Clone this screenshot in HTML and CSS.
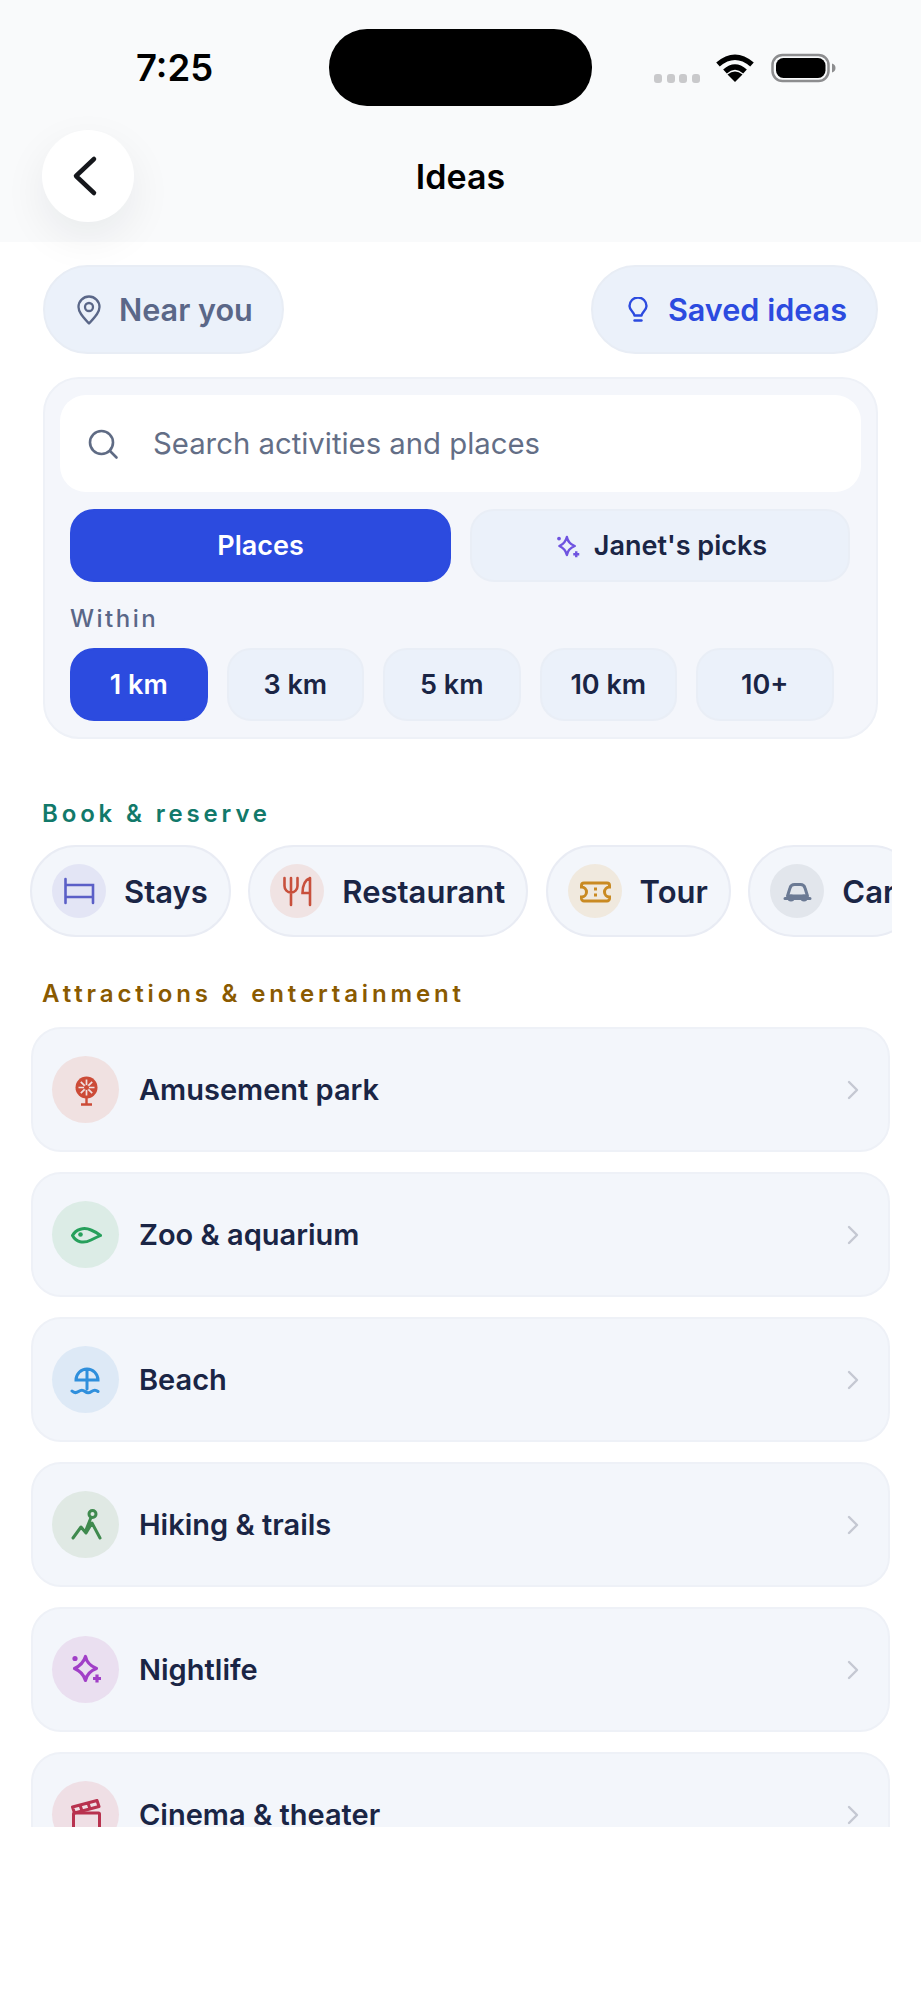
FILE: index.html
```html
<!DOCTYPE html>
<html lang="en">
<head>
    <meta charset="UTF-8">
    <meta name="viewport" content="width=device-width, initial-scale=1.0">
    <title>Ideas</title>
    <link rel="stylesheet" href="styles.css">
</head>
<body>

    <!-- Status bar and title -->
    <header class="top">
        <div class="status">
            <span class="time">7:25</span>
            <div class="island"></div>
            <div class="signal"><i></i><i></i><i></i><i></i></div>
            <svg class="wifi" width="40" height="29" viewBox="0 0 40 29">
                <path d="M3 11.5Q20 -3 37 11.5M10 18.5Q20 9.5 30 18.5" fill="none" stroke="#000" stroke-width="5.5"/>
                <path d="M20 29L12.5 21.5Q20 15.5 27.5 21.5Z"/>
            </svg>
            <svg class="battery" width="65" height="30" viewBox="0 0 65 30">
                <rect x="1.5" y="2" width="56" height="26" rx="10" fill="none" stroke="#8d8d8f" stroke-width="2.5"/>
                <rect x="5" y="5" width="49.500" height="20" rx="7.500"/>
                <path d="M61 10.500c2.500 .5 3.500 2.500 3.500 4.500s-1 4-3.500 4.500z" fill="#8d8d8f"/>
            </svg>
        </div>
        <div class="nav">
            <button class="back">
                <svg width="30" height="42" viewBox="0 0 30 42"><path d="M24 4L6 21L24 38" fill="none" stroke="#15171c" stroke-width="4.500" stroke-linecap="round" stroke-linejoin="round"/></svg>
            </button>
            <h1 class="title">Ideas</h1>
        </div>
    </header>

    <main class="content">
        <!-- Near you / saved -->
        <div class="top-actions">
            <div class="pill near">
                <svg width="24" height="30" viewBox="0 0 24 30" fill="none" stroke="#5a6788" stroke-width="2.300"><path d="M12 28.500C7 23 1.500 18 1.500 12a10.500 10.500 0 0 1 21 0C22.500 18 17 23 12 28.500Z" stroke-linejoin="round"/><circle cx="12" cy="12" r="4"/></svg>
                <span>Near you</span>
            </div>
            <div class="pill saved">
                <svg width="20" height="26" viewBox="0 0 20 26" fill="none" stroke="#2c4bdf" stroke-width="2.400" stroke-linecap="round"><path d="M6.500 18.500C6 15 1.500 13.500 1.500 9a8.500 8.500 0 0 1 17 0C18.500 13.500 14 15 13.500 18.500Z" stroke-linejoin="round"/><path d="M6.500 23.500H13.500"/></svg>
                <span>Saved ideas</span>
            </div>
        </div>

        <!-- Search card -->
        <section class="search-card">
            <div class="search">
                <svg width="32" height="32" viewBox="0 0 32 32" fill="none" stroke="#5f6b84" stroke-width="2.600" stroke-linecap="round"><circle cx="14.500" cy="14.500" r="11.500"/><path d="M23 23L29.500 29.500"/></svg>
                <span>Search activities and places</span>
            </div>
            <div class="mode-row">
                <div class="mode selected">Places</div>
                <div class="mode picks">
                    <svg width="24" height="24" viewBox="0 0 32 32" fill="none" stroke="#6f54e0" stroke-width="3.200"><path d="M14.500 4Q16 12.500 25 16Q16 19.500 14.500 28Q12.500 19.500 4.500 16Q12.500 12.500 14.500 4Z" stroke-linejoin="round"/><circle cx="4" cy="6" r="2.500" fill="#6f54e0" stroke="none"/><path d="M27 23V31M23 27H31"/></svg>
                    Janet's picks
                </div>
            </div>
            <p class="within">Within</p>
            <div class="km-row">
                <div class="km selected">1 km</div>
                <div class="km">3 km</div>
                <div class="km">5 km</div>
                <div class="km">10 km</div>
                <div class="km">10+</div>
            </div>
        </section>

        <!-- Book & reserve -->
        <h2 class="section-title book">Book &amp; reserve</h2>
        <div class="chips">
            <div class="chip">
                <div class="chip-icon stays">
                    <svg width="32" height="32" viewBox="0 0 32 32" fill="none" stroke="#5b5fc7" stroke-width="2.600" stroke-linecap="round"><path d="M2.500 4V28M2.500 10H30V28M2.500 22H30"/></svg>
                </div>
                <span>Stays</span>
            </div>
            <div class="chip">
                <div class="chip-icon food">
                    <svg width="32" height="32" viewBox="0 0 32 32" fill="none" stroke="#c8503c" stroke-width="2.600" stroke-linecap="round"><path d="M3.500 3V11a6.500 6.500 0 0 0 13 0V3M10 3V30M29 3V30M29 3C24 5 21.500 10 21.500 18H29"/></svg>
                </div>
                <span>Restaurant</span>
            </div>
            <div class="chip">
                <div class="chip-icon tour">
                    <svg width="32" height="32" viewBox="0 0 32 32" fill="none" stroke="#c98a22" stroke-width="3"><path d="M5 8H28a2.500 2.500 0 0 1 2.500 2.500V12a5 5 0 0 0 0 10v1.500A2.500 2.500 0 0 1 28 26H5a2.500 2.500 0 0 1-2.500-2.500V22a5 5 0 0 0 0-10V10.500A2.500 2.500 0 0 1 5 8Z"/><path d="M16.500 12.500V15.500M16.500 18.500V21.500"/></svg>
                </div>
                <span>Tour</span>
            </div>
            <div class="chip">
                <div class="chip-icon car">
                    <svg width="32" height="32" viewBox="0 0 32 32" fill="none" stroke="#6b7a94" stroke-width="3" stroke-linecap="round" stroke-linejoin="round"><path d="M6.500 21L9 13Q10 9.500 13.500 9.500H19.500Q23 9.500 24 13L26.500 21ZM4 23.500H29"/><circle cx="10" cy="23" r="3.500" fill="#6b7a94" stroke="none"/><circle cx="23" cy="23" r="3.500" fill="#6b7a94" stroke="none"/></svg>
                </div>
                <span>Car</span>
            </div>
        </div>

        <!-- Attractions list -->
        <h2 class="section-title attractions">Attractions &amp; entertainment</h2>
        <div class="list">
            <div class="row">
                <div class="row-icon park">
                    <svg width="32" height="32" viewBox="0 0 32 32"><circle cx="16.500" cy="13.500" r="11" fill="#cc4b37"/><path d="M16.500 5.500V21.500M8.500 13.500H24.500M10.800 7.800L22.200 19.200M22.200 7.800L10.800 19.200" stroke="#f0e1e1" stroke-width="1.700"/><circle cx="16.500" cy="13.500" r="2.500" fill="#cc4b37"/><path d="M16.500 24V30M11 30.500H22" stroke="#cc4b37" stroke-width="2.400" fill="none"/></svg>
                </div>
                <span class="row-name">Amusement park</span>
                <svg class="chevron" width="12" height="20" viewBox="0 0 12 20"><path d="M2 2L10 10L2 18" fill="none" stroke="#c4c8d2" stroke-width="2.400" stroke-linecap="round" stroke-linejoin="round"/></svg>
            </div>
            <div class="row">
                <div class="row-icon zoo">
                    <svg width="32" height="32" viewBox="0 0 32 32" fill="none" stroke="#27a05c" stroke-width="3"><path d="M2.500 16.500C6 10 14 8 21 11Q26 13 30.500 16.500Q25 19 21 21C13 25 6 23 2.500 16.500Z" stroke-linejoin="round"/><circle cx="10.500" cy="15.500" r="2.300" fill="#27a05c" stroke="none"/></svg>
                </div>
                <span class="row-name">Zoo &amp; aquarium</span>
                <svg class="chevron" width="12" height="20" viewBox="0 0 12 20"><path d="M2 2L10 10L2 18" fill="none" stroke="#c4c8d2" stroke-width="2.400" stroke-linecap="round" stroke-linejoin="round"/></svg>
            </div>
            <div class="row">
                <div class="row-icon beach">
                    <svg width="32" height="32" viewBox="0 0 32 32" fill="none" stroke="#2f8fdc" stroke-width="3" stroke-linecap="round"><path d="M6 16A11 11 0 0 1 28 16ZM17 5V25M2 27Q5 30 8.500 27.500T15 27.500T21.500 27.500T28 27.500"/></svg>
                </div>
                <span class="row-name">Beach</span>
                <svg class="chevron" width="12" height="20" viewBox="0 0 12 20"><path d="M2 2L10 10L2 18" fill="none" stroke="#c4c8d2" stroke-width="2.400" stroke-linecap="round" stroke-linejoin="round"/></svg>
            </div>
            <div class="row">
                <div class="row-icon hike">
                    <svg width="32" height="32" viewBox="0 0 32 32" fill="none" stroke="#3f8a4e" stroke-width="3" stroke-linecap="round" stroke-linejoin="round"><path d="M3 29L11 18L16 24L22 14L30 29M21 8.500L16 21"/><circle cx="22.500" cy="5" r="3.500"/></svg>
                </div>
                <span class="row-name">Hiking &amp; trails</span>
                <svg class="chevron" width="12" height="20" viewBox="0 0 12 20"><path d="M2 2L10 10L2 18" fill="none" stroke="#c4c8d2" stroke-width="2.400" stroke-linecap="round" stroke-linejoin="round"/></svg>
            </div>
            <div class="row">
                <div class="row-icon night">
                    <svg width="32" height="32" viewBox="0 0 32 32" fill="none" stroke="#a13fc7" stroke-width="3.200"><path d="M15.500 2.500Q17 10.500 26.500 14.500Q17 18 15.500 26.500Q13 18 4.500 14.500Q13 10.500 15.500 2.500Z" stroke-linejoin="round"/><circle cx="5" cy="4.500" r="2.600" fill="#a13fc7" stroke="none"/><path d="M27 20.500V28.500M23 24.500H31"/></svg>
                </div>
                <span class="row-name">Nightlife</span>
                <svg class="chevron" width="12" height="20" viewBox="0 0 12 20"><path d="M2 2L10 10L2 18" fill="none" stroke="#c4c8d2" stroke-width="2.400" stroke-linecap="round" stroke-linejoin="round"/></svg>
            </div>
            <div class="row">
                <div class="row-icon cinema">
                    <svg width="32" height="32" viewBox="0 0 32 32" fill="none" stroke="#b8324f" stroke-width="3" stroke-linejoin="round"><path d="M2.500 8L27 1.500L29 7.500L4.500 14ZM10 6L12 12M18 4L20 10"/><rect x="3.500" y="14" width="26" height="17" rx="1"/></svg>
                </div>
                <span class="row-name">Cinema &amp; theater</span>
                <svg class="chevron" width="12" height="20" viewBox="0 0 12 20"><path d="M2 2L10 10L2 18" fill="none" stroke="#c4c8d2" stroke-width="2.400" stroke-linecap="round" stroke-linejoin="round"/></svg>
            </div>
        </div>
    </main>

</body>
</html>
```

FILE: styles.css
```css
/* General Styles */
* {
    box-sizing: border-box;
}

body {
    font-family: Inter, "Noto Sans", sans-serif;
    background-color: #ffffff;
    color: #1a2545;
    margin: 0;
    padding: 0;
    height: 2000px;
    overflow: hidden;
}

/* Header */
.top {
    background: #f9fafb;
    height: 242px;
}

.status {
    display: flex;
    align-items: center;
    height: 106px;
    padding: 29px 0 0 136px;
}

.time {
    width: 193px;
    font-size: 36.5px;
    font-weight: 600;
    color: #000;
}

.island {
    width: 263px;
    height: 77px;
    border-radius: 38px;
    background: #000;
}

.signal {
    display: flex;
    gap: 4.5px;
    margin: 21px 0 0 62px;
}

.signal i {
    width: 8px;
    height: 9px;
    border-radius: 3px;
    background: #c9c9cb;
}

.wifi {
    margin: 0 0 0 15px;
}

.battery {
    margin-left: 16px;
}

.nav {
    display: grid;
    grid-template-columns: 92px 1fr 92px;
    align-items: center;
    padding: 24px 42px 0;
}

.back {
    display: flex;
    align-items: center;
    justify-content: center;
    width: 92px;
    height: 92px;
    padding: 0 6px 0 0;
    border: none;
    border-radius: 50%;
    background: #fff;
    box-shadow: 0 16px 44px rgba(20, 24, 40, 0.07);
}

.title {
    margin: 0;
    text-align: center;
    font-size: 34px;
    font-weight: 600;
    color: #000;
}

/* Page content */
.content {
    height: 1585px;
    overflow: hidden;
}

.top-actions {
    display: flex;
    justify-content: space-between;
    padding: 23px 43px 0;
}

.pill {
    display: flex;
    align-items: center;
    height: 89px;
    border-radius: 45px;
    background: #ebf1fa;
    border: 2px solid #e8edf5;
    font-size: 30.6px;
    font-weight: 600;
}

.near {
    gap: 18px;
    padding: 0 29px 0 32px;
    color: #5a6788;
}

.saved {
    gap: 20px;
    padding: 0 29px 0 35px;
    color: #2c4bdf;
}

/* Search card */
.search-card {
    margin: 23px 43px 0;
    padding: 16px 15px 16px;
    background: #f4f6fb;
    border: 2px solid #eef1f7;
    border-radius: 36px;
}

.search {
    display: flex;
    align-items: center;
    gap: 34px;
    height: 97px;
    padding-left: 27px;
    background: #fff;
    border-radius: 26px;
    font-size: 29.3px;
    color: #636e86;
}

.mode-row {
    display: grid;
    grid-template-columns: 381px 380px;
    gap: 19px;
    margin: 17px 10px 0;
}

.mode {
    display: flex;
    align-items: center;
    justify-content: center;
    gap: 14px;
    height: 73px;
    border-radius: 24px;
    background: #ebf1fa;
    border: 2px solid #e9eef6;
    font-size: 27px;
    font-weight: 600;
}

.picks {
    padding-left: 3px;
}

.mode.selected,
.km.selected {
    background: #2c4bdf;
    border-color: #2c4bdf;
    color: #fff;
}

.within {
    margin: 22px 10px 0;
    font-size: 24px;
    line-height: 30px;
    font-weight: 500;
    letter-spacing: 2.5px;
    color: #5a6788;
}

.km-row {
    display: flex;
    gap: 19px;
    margin: 14px 10px 0;
}

.km {
    display: flex;
    align-items: center;
    justify-content: center;
    width: 137.5px;
    height: 73px;
    border-radius: 24px;
    background: #ebf1fa;
    border: 2px solid #e9eef6;
    font-size: 27px;
    font-weight: 600;
}

/* Section titles */
.section-title {
    margin: 0 0 16px 42px;
    font-size: 24px;
    line-height: 30px;
    font-weight: 600;
    letter-spacing: 3.85px;
}

.book {
    margin-top: 60px;
    color: #12796a;
}

.attractions {
    margin-top: 42px;
    margin-bottom: 18px;
    color: #8a5a00;
}

/* Category chips */
.chips {
    display: flex;
    gap: 17.5px;
    width: 862px;
    margin-left: 30px;
    overflow: hidden;
}

.chip {
    display: flex;
    flex: none;
    align-items: center;
    gap: 18px;
    height: 92px;
    padding: 0 21px 0 20px;
    border-radius: 46px;
    background: #f3f6fb;
    border: 2px solid #e9ecf4;
    font-size: 31px;
    font-weight: 600;
}

.chip-icon {
    display: flex;
    align-items: center;
    justify-content: center;
    width: 54px;
    height: 54px;
    border-radius: 50%;
}

.stays { background: #e3e5f5; }
.food { background: #f0e3e3; }
.tour { background: #f0e9de; }
.car { background: #e2e6ec; }

/* Attractions list */
.list {
    display: flex;
    flex-direction: column;
    gap: 20px;
    margin: 0 31px;
}

.row {
    display: flex;
    flex: none;
    align-items: center;
    gap: 20px;
    height: 125px;
    padding: 0 29px 0 19px;
    border-radius: 30px;
    background: #f3f6fb;
    border: 2px solid #eef1f7;
}

.row-name {
    flex: 1;
    font-size: 29px;
    font-weight: 600;
}

.row-icon {
    display: flex;
    align-items: center;
    justify-content: center;
    width: 67px;
    height: 67px;
    border-radius: 50%;
}

.park { background: #f0e1e1; }
.zoo { background: #dcece6; }
.beach { background: #dde9f6; }
.hike { background: #e0e9e4; }
.night { background: #eadff0; }
.cinema { background: #efdfe5; }
```
